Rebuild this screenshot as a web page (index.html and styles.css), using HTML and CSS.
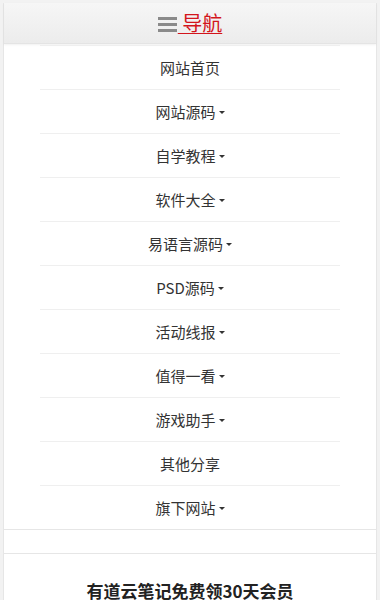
FILE: index.html
```html
<!DOCTYPE html>
<html lang="zh-CN">
<head>
<meta charset="utf-8">
<title>导航</title>
<link rel="stylesheet" href="styles.css">
</head>
<body>
<div class="page">
  <div class="nav-box">
    <div class="nav-head">
      <svg class="menu-icon" width="19" height="16" viewBox="0 0 19 16"><rect x="0" y="1" width="19" height="3" fill="#8a8a8a"/><rect x="0" y="7" width="19" height="3" fill="#8a8a8a"/><rect x="0" y="13" width="19" height="3" fill="#8a8a8a"/></svg>
      <a class="nav-title" href="#">&nbsp;导航</a>
    </div>
    <ul class="menu">
      <li><a href="#">网站首页</a></li>
      <li><a href="#">网站源码<span class="caret"></span></a></li>
      <li><a href="#">自学教程<span class="caret"></span></a></li>
      <li><a href="#">软件大全<span class="caret"></span></a></li>
      <li><a href="#">易语言源码<span class="caret"></span></a></li>
      <li><a href="#">PSD源码<span class="caret"></span></a></li>
      <li><a href="#">活动线报<span class="caret"></span></a></li>
      <li><a href="#">值得一看<span class="caret"></span></a></li>
      <li><a href="#">游戏助手<span class="caret"></span></a></li>
      <li><a href="#">其他分享</a></li>
      <li><a href="#">旗下网站<span class="caret"></span></a></li>
    </ul>
  </div>
  <div class="spacer"></div>
  <div class="post">
    <h2 class="post-title">有道云笔记免费领30天会员</h2>
  </div>
</div>
</body>
</html>
```
FILE: styles.css
```css
html, body {
  margin: 0;
  padding: 0;
}
body {
  background: #f2f2f2;
  font-family: "Noto Sans CJK SC", "Noto Sans", sans-serif;
  color: #333;
  padding: 3px 3px 0 3px;
  height: 597px;
  overflow: hidden;
}
.page {
  background: #fff;
  border-left: 1px solid #e6e6e6;
  border-right: 1px solid #e6e6e6;
}
.nav-head {
  height: 40px;
  background: linear-gradient(#f6f6f6, #ececec);
  border-bottom: 1px solid #e4e4e4;
  box-shadow: 0 1px 2px rgba(0,0,0,0.06);
  display: flex;
  align-items: center;
  justify-content: center;
  gap: 1px;
}
.menu-icon {
  display: block;
  margin-top: 1px;
}
.nav-title {
  color: #d3151c;
  font-size: 20px;
  line-height: 24px;
  text-decoration: underline;
  text-decoration-thickness: 1px;
  text-underline-offset: 2px;
}
.menu {
  list-style: none;
  margin: 0;
  padding: 1px 36px 0 36px;
}
.menu li {
  border-top: 1px solid #efefef;
  height: 43px;
  display: flex;
  align-items: center;
  justify-content: center;
}
.menu a {
  color: #333;
  text-decoration: none;
  font-size: 15px;
  line-height: 20px;
  display: flex;
  align-items: center;
}
.caret {
  display: inline-block;
  width: 0;
  height: 0;
  border-left: 3px solid transparent;
  border-right: 3px solid transparent;
  border-top: 3px solid #333;
  margin-left: 3px;
  margin-top: 2px;
}
.spacer {
  height: 23px;
  border-top: 1px solid #e6e6e6;
}
.post {
  border-top: 1px solid #e6e6e6;
  padding-top: 26px;
  height: 100px;
}
.post-title {
  margin: 0;
  text-align: center;
  font-size: 17px;
  font-weight: bold;
  color: #222;
  line-height: 22px;
}
```
